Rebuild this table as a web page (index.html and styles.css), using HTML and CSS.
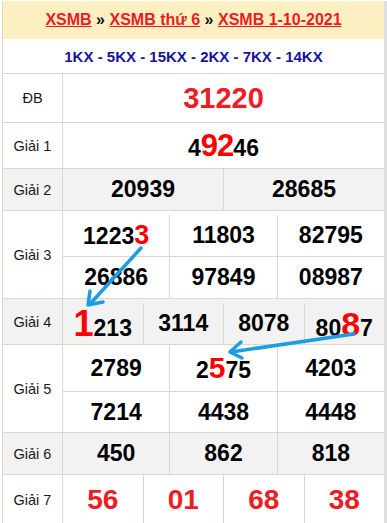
FILE: index.html
```html
<!DOCTYPE html>
<html lang="vi">
<head>
<meta charset="utf-8">
<title>XSMB 1-10-2021</title>
<link rel="stylesheet" href="styles.css">
</head>
<body>
<div class="page">
  <div class="board">
    <div class="head"><a href="#">XSMB</a>&nbsp;»&nbsp;<a href="#">XSMB thứ 6</a>&nbsp;»&nbsp;<a href="#">XSMB 1-10-2021</a></div>
    <div class="kx">1KX - 5KX - 15KX - 2KX - 7KX - 14KX</div>

    <div class="row r-db">
      <div class="label">ĐB</div>
      <div class="vals"><div class="cell red">31220</div></div>
    </div>

    <div class="row r-g1">
      <div class="label">Giải 1</div>
      <div class="vals"><div class="cell">4<span class="hl h92">92</span>46</div></div>
    </div>

    <div class="row alt r-g2">
      <div class="label">Giải 2</div>
      <div class="vals c2">
        <div class="cell">20939</div>
        <div class="cell">28685</div>
      </div>
    </div>

    <div class="row r-g3">
      <div class="label">Giải 3</div>
      <div class="vals c3 pad">
        <div class="cell">1223<span class="hl h27">3</span></div>
        <div class="cell">11803</div>
        <div class="cell">82795</div>
        <div class="cell">26886</div>
        <div class="cell">97849</div>
        <div class="cell">08987</div>
      </div>
    </div>

    <div class="row alt r-g4">
      <div class="label">Giải 4</div>
      <div class="vals c4 pad">
        <div class="cell"><span class="hl h36">1</span>213</div>
        <div class="cell">3114</div>
        <div class="cell">8078</div>
        <div class="cell">80<span class="hl h34">8</span>7</div>
      </div>
    </div>

    <div class="row r-g5">
      <div class="label">Giải 5</div>
      <div class="vals c3">
        <div class="cell">2789</div>
        <div class="cell">2<span class="hl h30">5</span>75</div>
        <div class="cell">4203</div>
        <div class="cell">7214</div>
        <div class="cell">4438</div>
        <div class="cell">4448</div>
      </div>
    </div>

    <div class="row alt r-g6">
      <div class="label">Giải 6</div>
      <div class="vals c3">
        <div class="cell">450</div>
        <div class="cell">862</div>
        <div class="cell">818</div>
      </div>
    </div>

    <div class="row r-g7">
      <div class="label">Giải 7</div>
      <div class="vals c4">
        <div class="cell red s7">56</div>
        <div class="cell red s7">01</div>
        <div class="cell red s7">68</div>
        <div class="cell red s7">38</div>
      </div>
    </div>
  </div>

  <svg class="arrows" width="387" height="523" viewBox="0 0 387 523">
    <g fill="none" stroke="#1b9de2" stroke-width="3.5" stroke-linecap="round" stroke-linejoin="round">
      <line x1="141" y1="248" x2="90" y2="304"/>
      <polyline points="90,291 88,305 103,302"/>
      <line x1="354" y1="334" x2="231" y2="352"/>
      <polyline points="241,342 230,352 242,358"/>
    </g>
  </svg>
</div>
</body>
</html>
```

FILE: styles.css
```css
* { box-sizing: border-box; }

body {
  margin: 0;
  background: #fff;
  font-family: "Liberation Sans", Arial, sans-serif;
}

.page {
  position: relative;
  width: 387px;
  height: 523px;
  overflow: hidden;
}

.board {
  margin: 1px 0 0 2px;
  width: 385px;
  border-left: 1px solid #ddd6d0;
  border-right: 3px solid #dedede;
}

.head {
  height: 38px;
  background: #fcf0c2;
  display: flex;
  align-items: center;
  justify-content: center;
  font-weight: bold;
  font-size: 16px;
  color: #111;
}

.head a {
  color: #ee1b24;
  text-decoration: underline;
}

.kx {
  height: 35px;
  border-bottom: 1px solid #ddd5cf;
  display: flex;
  align-items: center;
  justify-content: center;
  color: #14149c;
  font-weight: bold;
  font-size: 15px;
}

.row {
  display: grid;
  grid-template-columns: 60px 1fr;
  border-bottom: 1px solid #ddd5cf;
  background: #fff;
}

.row.alt { background: #f2f2f2; }

.label {
  border-right: 1px solid #ddd5cf;
  display: flex;
  align-items: center;
  justify-content: center;
  font-size: 14.5px;
  color: #1a1a1a;
}

.vals {
  display: grid;
  gap: 1px;
  background: #ddd5cf;
  grid-auto-rows: 1fr;
}

.vals.c2 { grid-template-columns: repeat(2, 1fr); }
.vals.c3 { grid-template-columns: repeat(3, 1fr); }
.vals.c4 { grid-template-columns: repeat(4, 1fr); }

.vals.pad { border-top: 4px solid #fff; }
.alt .vals.pad { border-top-color: #f2f2f2; }

.cell {
  display: flex;
  align-items: baseline;
  justify-content: center;
  padding-top: 0;
  font-weight: bold;
  font-size: 23px;
  color: #000;
  background: #fff;
  line-height: 1;
}

.cell::before { content: ""; align-self: center; }

.alt .cell { background: #f2f2f2; }

.vals .cell { align-content: center; flex-wrap: wrap; }

.red {
  color: #ee1c25;
  font-size: 29px;
}

.red.s7 { font-size: 28px; }

.hl { color: #ff0000; }
.h92 { font-size: 31px; letter-spacing: -1px; }
.h27 { font-size: 27px; }
.h36 { font-size: 36px; }
.h34 { font-size: 34px; }
.h30 { font-size: 30px; }

.r-db { height: 49px; }
.r-g1 { height: 46px; }
.r-g2 { height: 42px; }
.r-g3 { height: 88px; }
.r-g3 .vals { grid-template-rows: 41px 41px; }
.r-g4 { height: 46px; }
.r-g5 { height: 88px; }
.r-g5 .vals { grid-template-rows: 46px 40px; }
.r-g6 { height: 42px; }
.r-g7 { height: 50px; }

.arrows {
  position: absolute;
  left: 0;
  top: 0;
  pointer-events: none;
}
```
